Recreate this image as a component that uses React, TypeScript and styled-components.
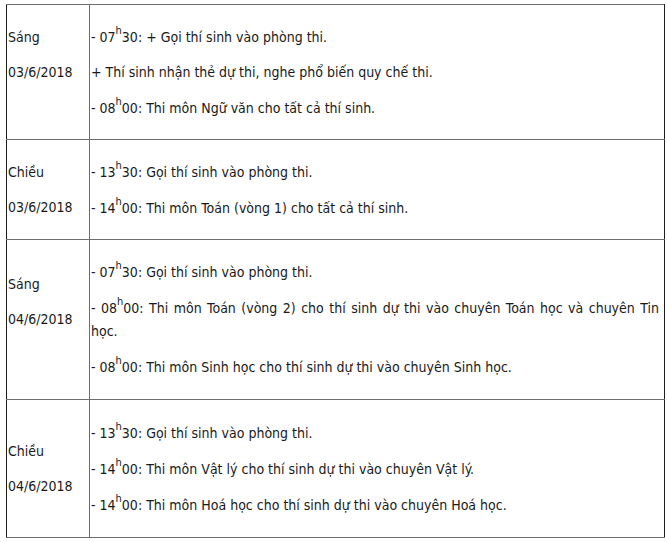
import React from 'react';
import styled, { createGlobalStyle } from 'styled-components';

const GlobalStyle = createGlobalStyle`
  html, body {
    margin: 0;
    padding: 0;
    background: #ffffff;
  }
`;

type Line = { pre: string; time?: [string, string]; text: string };

interface Session {
  label: string;
  date: string;
  height: number;
  spacer?: boolean;
  items: Line[];
}

const sessions: Session[] = [
  {
    label: 'Sáng',
    date: '03/6/2018',
    height: 135,
    spacer: true,
    items: [
      { pre: '- ', time: ['07', '30'], text: ': + Gọi thí sinh vào phòng thi.' },
      { pre: '+ Thí sinh nhận thẻ dự thi, nghe phổ biến quy chế thi.', text: '' },
      { pre: '- ', time: ['08', '00'], text: ': Thi môn Ngữ văn cho tất cả thí sinh.' },
    ],
  },
  {
    label: 'Chiều',
    date: '03/6/2018',
    height: 100,
    items: [
      { pre: '- ', time: ['13', '30'], text: ': Gọi thí sinh vào phòng thi.' },
      { pre: '- ', time: ['14', '00'], text: ': Thi môn Toán (vòng 1) cho tất cả thí sinh.' },
    ],
  },
  {
    label: 'Sáng',
    date: '04/6/2018',
    height: 160,
    spacer: true,
    items: [
      { pre: '- ', time: ['07', '30'], text: ': Gọi thí sinh vào phòng thi.' },
      {
        pre: '- ',
        time: ['08', '00'],
        text: ': Thi môn Toán (vòng 2) cho thí sinh dự thi vào chuyên Toán học và chuyên Tin học.',
      },
      {
        pre: '- ',
        time: ['08', '00'],
        text: ': Thi môn Sinh học cho thí sinh dự thi vào chuyên Sinh học.',
      },
    ],
  },
  {
    label: 'Chiều',
    date: '04/6/2018',
    height: 138,
    items: [
      { pre: '- ', time: ['13', '30'], text: ': Gọi thí sinh vào phòng thi.' },
      { pre: '- ', time: ['14', '00'], text: ': Thi môn Vật lý cho thí sinh dự thi vào chuyên Vật lý.' },
      { pre: '- ', time: ['14', '00'], text: ': Thi môn Hoá học cho thí sinh dự thi vào chuyên Hoá học.' },
    ],
  },
];

const App = () => {
  return (
    <Page>
      <GlobalStyle />
      <Schedule>
        <colgroup>
          <DayCol />
          <col />
        </colgroup>
        <tbody>
          {sessions.map((s, i) => (
            <Row key={i} $h={s.height}>
              <DayCell>
                <Para>{s.label}</Para>
                <Para>{s.date}</Para>
                {s.spacer && <Para>&nbsp;</Para>}
              </DayCell>
              <PlanCell>
                {s.items.map((it, j) => (
                  <Para key={j}>
                    {it.pre}
                    {it.time && (
                      <>
                        {it.time[0]}
                        <Sup>h</Sup>
                        {it.time[1]}
                      </>
                    )}
                    {it.text}
                  </Para>
                ))}
              </PlanCell>
            </Row>
          ))}
        </tbody>
      </Schedule>
    </Page>
  );
};

export default App;

const Page = styled.div`
  padding: 4px 0 0 6px;
  font-family: 'DejaVu Sans Condensed', 'DejaVu Sans', sans-serif;
  font-stretch: condensed;
  font-size: 14px;
  color: #1a1a1a;
`;

const Schedule = styled.table`
  width: 659px;
  border-collapse: collapse;
  border: 1px solid #1e1e1e;
  table-layout: fixed;
`;

const DayCol = styled.col`
  width: 83px;
`;

const Row = styled.tr<{ $h: number }>`
  height: ${p => p.$h}px;
`;

const DayCell = styled.td`
  vertical-align: middle;
  padding: 0 2px 0 1px;
  border: 1px solid #6e6e6e;
  border-left-color: #1e1e1e;
`;

const PlanCell = styled.td`
  vertical-align: middle;
  padding: 0 5px 0 1px;
  border: 1px solid #6e6e6e;
  border-right-color: #1e1e1e;
  text-align: justify;
`;

const Para = styled.p`
  margin: 12px 0;
  line-height: 23px;
`;

const Sup = styled.span`
  font-size: 11px;
  line-height: 1;
  vertical-align: 8px;
`;
